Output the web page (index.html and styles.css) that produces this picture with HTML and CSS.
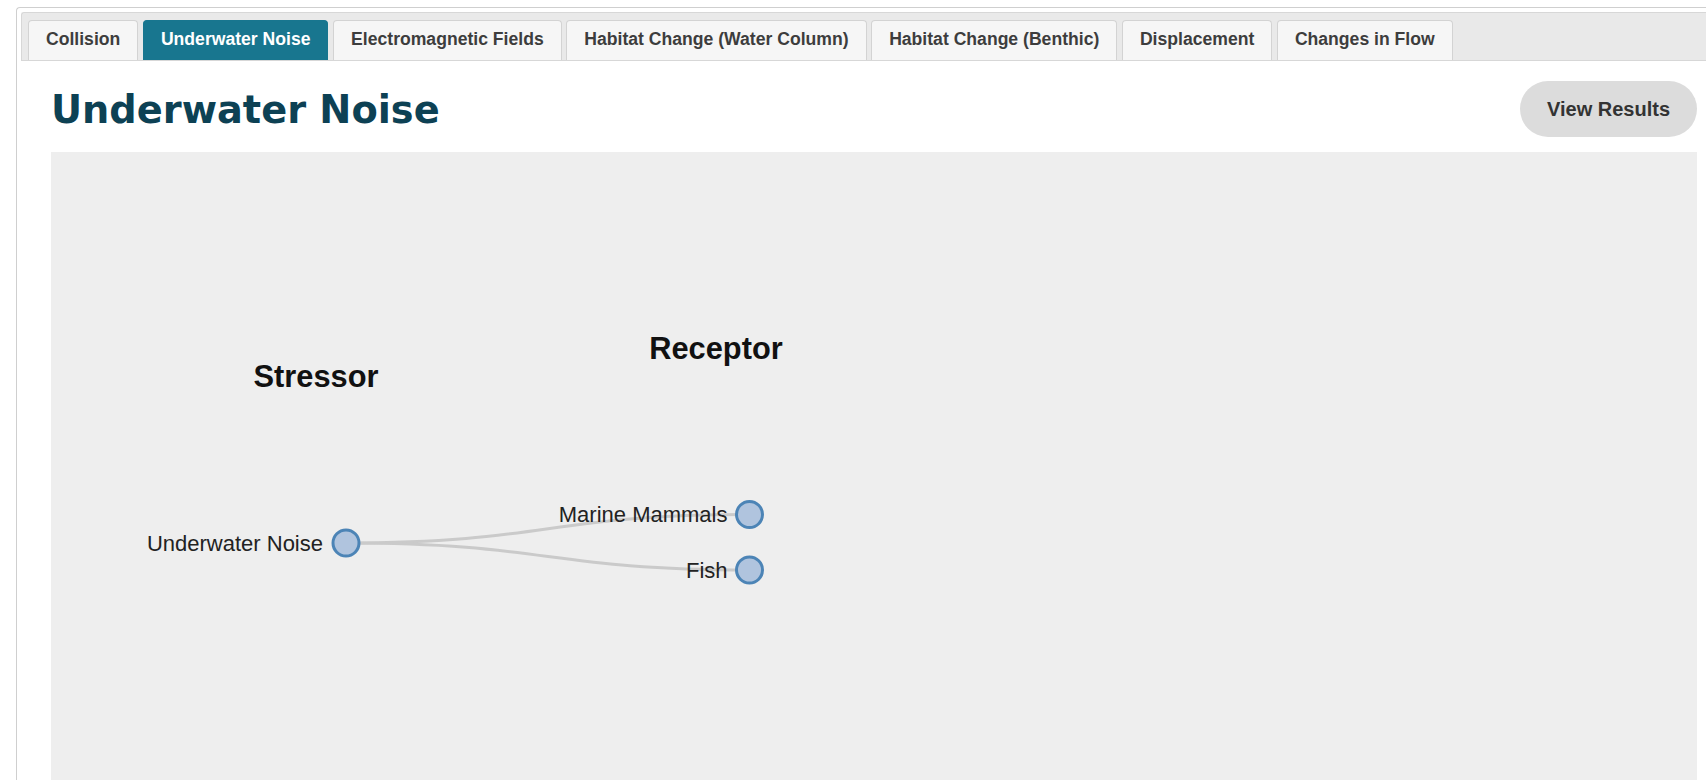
FILE: index.html
```html
<!DOCTYPE html>
<html lang="en">
<head>
<meta charset="utf-8">
<title>Underwater Noise</title>
<link rel="stylesheet" href="styles.css">
</head>
<body>
<div class="panel">
  <nav class="tabs">
    <a class="tab">Collision</a>
    <a class="tab active">Underwater Noise</a>
    <a class="tab">Electromagnetic Fields</a>
    <a class="tab">Habitat Change (Water Column)</a>
    <a class="tab">Habitat Change (Benthic)</a>
    <a class="tab">Displacement</a>
    <a class="tab">Changes in Flow</a>
  </nav>
  <section class="content">
    <header class="head">
      <h1 class="title">Underwater Noise</h1>
      <button class="results-btn" type="button">View Results</button>
    </header>
    <div class="canvas">
      <svg class="tree" width="1646" height="640" viewBox="0 0 1646 640">
        <text class="col-label" x="265" y="235" text-anchor="middle">Stressor</text>
        <text class="col-label" x="665" y="207" text-anchor="middle">Receptor</text>
        <path class="link" d="M295,391 C497,391 497,362.5 698.5,362.5"/>
        <path class="link" d="M295,391 C497,391 497,418 698.5,418"/>
        <g class="node" transform="translate(295,391)">
          <circle r="13"/>
          <text x="-23" dy="0.35em" text-anchor="end">Underwater Noise</text>
        </g>
        <g class="node" transform="translate(698.5,362.5)">
          <circle r="13"/>
          <text x="-22" dy="0.35em" text-anchor="end">Marine Mammals</text>
        </g>
        <g class="node" transform="translate(698.5,418)">
          <circle r="13"/>
          <text x="-22" dy="0.35em" text-anchor="end">Fish</text>
        </g>
      </svg>
    </div>
  </section>
</div>
</body>
</html>
```
FILE: styles.css
```css
html, body {
  margin: 0;
  padding: 0;
  background: #fff;
  overflow: hidden;
}

body {
  font-family: "Liberation Sans", Arial, sans-serif;
  color: #333;
}

/* outer tab panel, running off the right edge */
.panel {
  margin: 7px 0 0 16px;
  border-top: 1px solid #cfcfcf;
  border-left: 1px solid #cfcfcf;
  border-top-left-radius: 4px;
  padding: 4px 0 0 4px;
  height: 800px;
}

/* tab strip */
.tabs {
  display: flex;
  align-items: flex-end;
  gap: 4.6px;
  height: 40px;
  padding: 7px 0 0 6px;
  background: #e9e9e9;
  border: 1px solid #d7d7d7;
  border-right: none;
  border-radius: 3px 0 0 0;
}

.tab {
  display: flex;
  align-items: center;
  height: 40px;
  box-sizing: border-box;
  padding: 0 17px 2px;
  background: #f6f6f6;
  border: 1px solid #d3d3d3;
  border-bottom: none;
  border-radius: 4px 4px 0 0;
  font-size: 17.6px;
  font-weight: bold;
  color: #3d3d3d;
  white-space: nowrap;
  cursor: pointer;
}

.tab.active {
  background: #18768f;
  border-color: #18768f;
  color: #fff;
}

/* page body */
.content {
  padding: 20px 9px 0 30px;
}

.head {
  display: flex;
  align-items: center;
  justify-content: space-between;
  height: 56px;
  margin-bottom: 15px;
}

.title {
  margin: 0;
  font-family: "DejaVu Sans", Verdana, sans-serif;
  font-size: 38.3px;
  font-weight: bold;
  color: #0d4154;
}

.results-btn {
  width: 177px;
  height: 56px;
  border: none;
  border-radius: 28px;
  background: #dcdcdc;
  font-family: "Liberation Sans", Arial, sans-serif;
  font-size: 20px;
  font-weight: bold;
  color: #333;
  cursor: pointer;
}

.canvas {
  background: #eeeeee;
  height: 640px;
}

.tree {
  display: block;
}

.col-label {
  font-family: "Liberation Sans", Arial, sans-serif;
  font-size: 30.8px;
  font-weight: bold;
  fill: #111;
}

.link {
  fill: none;
  stroke: #cacaca;
  stroke-width: 3;
}

.node circle {
  fill: #b0c4de;
  stroke: #4c84b6;
  stroke-width: 3;
}

.node text {
  font-family: "Liberation Sans", Arial, sans-serif;
  font-size: 22px;
  fill: #222;
}
```
